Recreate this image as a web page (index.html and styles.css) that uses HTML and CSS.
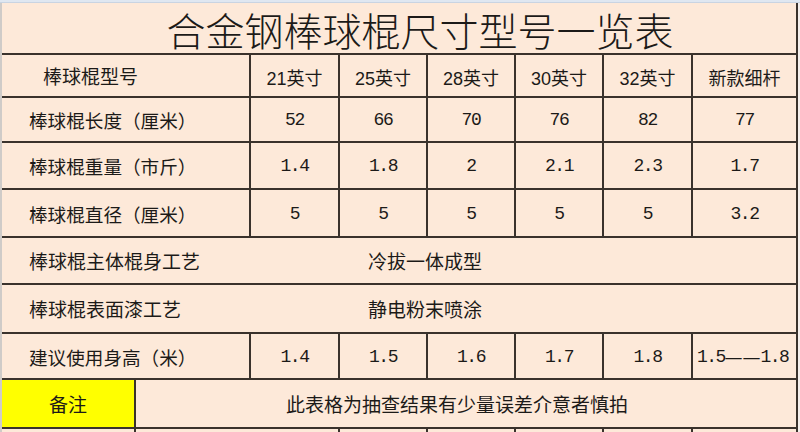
FILE: index.html
```html
<!DOCTYPE html>
<html lang="zh-CN">
<head>
<meta charset="utf-8">
<title>合金钢棒球棍尺寸型号一览表</title>
<link rel="stylesheet" href="styles.css">
</head>
<body>
<div class="sheet">
  <div class="topstrip"></div>
  <div class="frame">
    <div class="gutter"></div>
    <div class="table">
      <div class="grid">
        <div class="cell title">合金钢棒球棍尺寸型号一览表</div>

        <div class="cell label head-label">棒球棍型号</div>
        <div class="cell size">21英寸</div>
        <div class="cell size">25英寸</div>
        <div class="cell size">28英寸</div>
        <div class="cell size">30英寸</div>
        <div class="cell size">32英寸</div>
        <div class="cell size">新款细杆</div>

        <div class="cell label">棒球棍长度（厘米）</div>
        <div class="cell num">52</div>
        <div class="cell num">66</div>
        <div class="cell num">70</div>
        <div class="cell num">76</div>
        <div class="cell num">82</div>
        <div class="cell num">77</div>

        <div class="cell label">棒球棍重量（市斤）</div>
        <div class="cell num">1.4</div>
        <div class="cell num">1.8</div>
        <div class="cell num">2</div>
        <div class="cell num">2.1</div>
        <div class="cell num">2.3</div>
        <div class="cell num">1.7</div>

        <div class="cell label">棒球棍直径（厘米）</div>
        <div class="cell num">5</div>
        <div class="cell num">5</div>
        <div class="cell num">5</div>
        <div class="cell num">5</div>
        <div class="cell num">5</div>
        <div class="cell num">3.2</div>

        <div class="cell merged">
          <span class="merged-label">棒球棍主体棍身工艺</span>
          <span class="merged-value">冷拔一体成型</span>
        </div>

        <div class="cell merged">
          <span class="merged-label">棒球棍表面漆工艺</span>
          <span class="merged-value">静电粉末喷涂</span>
        </div>

        <div class="cell label">建议使用身高（米）</div>
        <div class="cell num">1.4</div>
        <div class="cell num">1.5</div>
        <div class="cell num">1.6</div>
        <div class="cell num">1.7</div>
        <div class="cell num">1.8</div>
        <div class="cell num range">1.5<span class="dash">——</span>1.8</div>
      </div>

      <div class="remark">
        <div class="cell note">备注</div>
        <div class="cell note-text">此表格为抽查结果有少量误差介意者慎拍</div>
      </div>

      <div class="tail">
        <div class="cell t1"></div>
        <div class="cell t2"></div>
        <div class="cell t3"></div>
        <div class="cell t3"></div>
        <div class="cell t3"></div>
        <div class="cell t4"></div>
        <div class="cell t5"></div>
      </div>
    </div>
    <div class="rest"></div>
  </div>
</div>
</body>
</html>
```

FILE: styles.css
```css
html, body {
  margin: 0;
  padding: 0;
  background: #fde9d9;
}

body {
  width: 800px;
  height: 432px;
  overflow: hidden;
  font-family: "Liberation Sans", "Noto Sans CJK SC", sans-serif;
  color: #1c1a18;
}

.sheet {
  display: flex;
  flex-direction: column;
  width: 800px;
  height: 432px;
}

.topstrip {
  height: 3px;
  background: #dfe7f1;
  border-bottom: 1px solid #c9d4e2;
  box-sizing: border-box;
}

.frame {
  display: flex;
  flex: 1;
  min-height: 0;
}

.gutter {
  width: 2px;
  background: #cfcbc8;
}

.rest {
  width: 2px;
  background: #f4efec;
}

.table {
  width: 796px;
  display: flex;
  flex-direction: column;
  gap: 2px;
  background: #3a322c;
  padding-right: 2px;
}

.grid {
  display: grid;
  grid-template-columns: 247px 87px 86px 86px 86px 87px 103px;
  grid-template-rows: 50px 41px 43px 45px 46px 45px 47px 44px;
  gap: 2px;
}

.cell {
  background: #fde9d9;
  display: flex;
  align-items: center;
  justify-content: center;
  font-size: 19px;
  white-space: nowrap;
  overflow: hidden;
}

.title {
  grid-column: 1 / -1;
  font-family: "Noto Sans CJK SC", sans-serif;
  font-weight: 300;
  font-size: 39px;
  line-height: 1;
  overflow: visible;
  padding-left: 42px;
  padding-top: 3px;
  box-sizing: border-box;
}

.label {
  justify-content: flex-start;
  padding-left: 27px;
  font-family: "Noto Sans CJK SC", sans-serif;
  font-size: 18.6px;
}

.head-label {
  padding-left: 41px;
  font-size: 19px;
}

.size {
  font-size: 18px;
  padding-top: 2px;
  box-sizing: border-box;
}

.num {
  font-family: "Liberation Mono", "Noto Sans CJK SC", monospace;
  font-size: 18px;
  letter-spacing: -1.4px;
  padding-top: 1px;
  box-sizing: border-box;
}

.range {
  letter-spacing: -1.6px;
  justify-content: flex-start;
  padding-left: 4px;
}

.dash {
  font-family: "DejaVu Sans", sans-serif;
  font-size: 18px;
  letter-spacing: 0;
}

.merged {
  grid-column: 1 / -1;
  justify-content: flex-start;
  font-family: "Noto Sans CJK SC", sans-serif;
  font-size: 19px;
}

.merged-label {
  width: 366px;
  padding-left: 27px;
  box-sizing: border-box;
}

.merged-value {
  display: block;
}

.remark {
  display: flex;
  gap: 2px;
  height: 47px;
}

.note {
  width: 132px;
  background: #ffff00;
  font-family: "Noto Sans CJK SC", sans-serif;
  font-size: 19px;
}

.note-text {
  flex: 1;
  font-family: "Noto Sans CJK SC", sans-serif;
  font-size: 19px;
  padding-right: 18px;
}

.tail {
  display: flex;
  gap: 2px;
  flex: 1;
}

.t1 { width: 132px; }
.t2 { width: 202px; }
.t3 { width: 86px; }
.t4 { width: 87px; }
.t5 { width: 103px; }
```
